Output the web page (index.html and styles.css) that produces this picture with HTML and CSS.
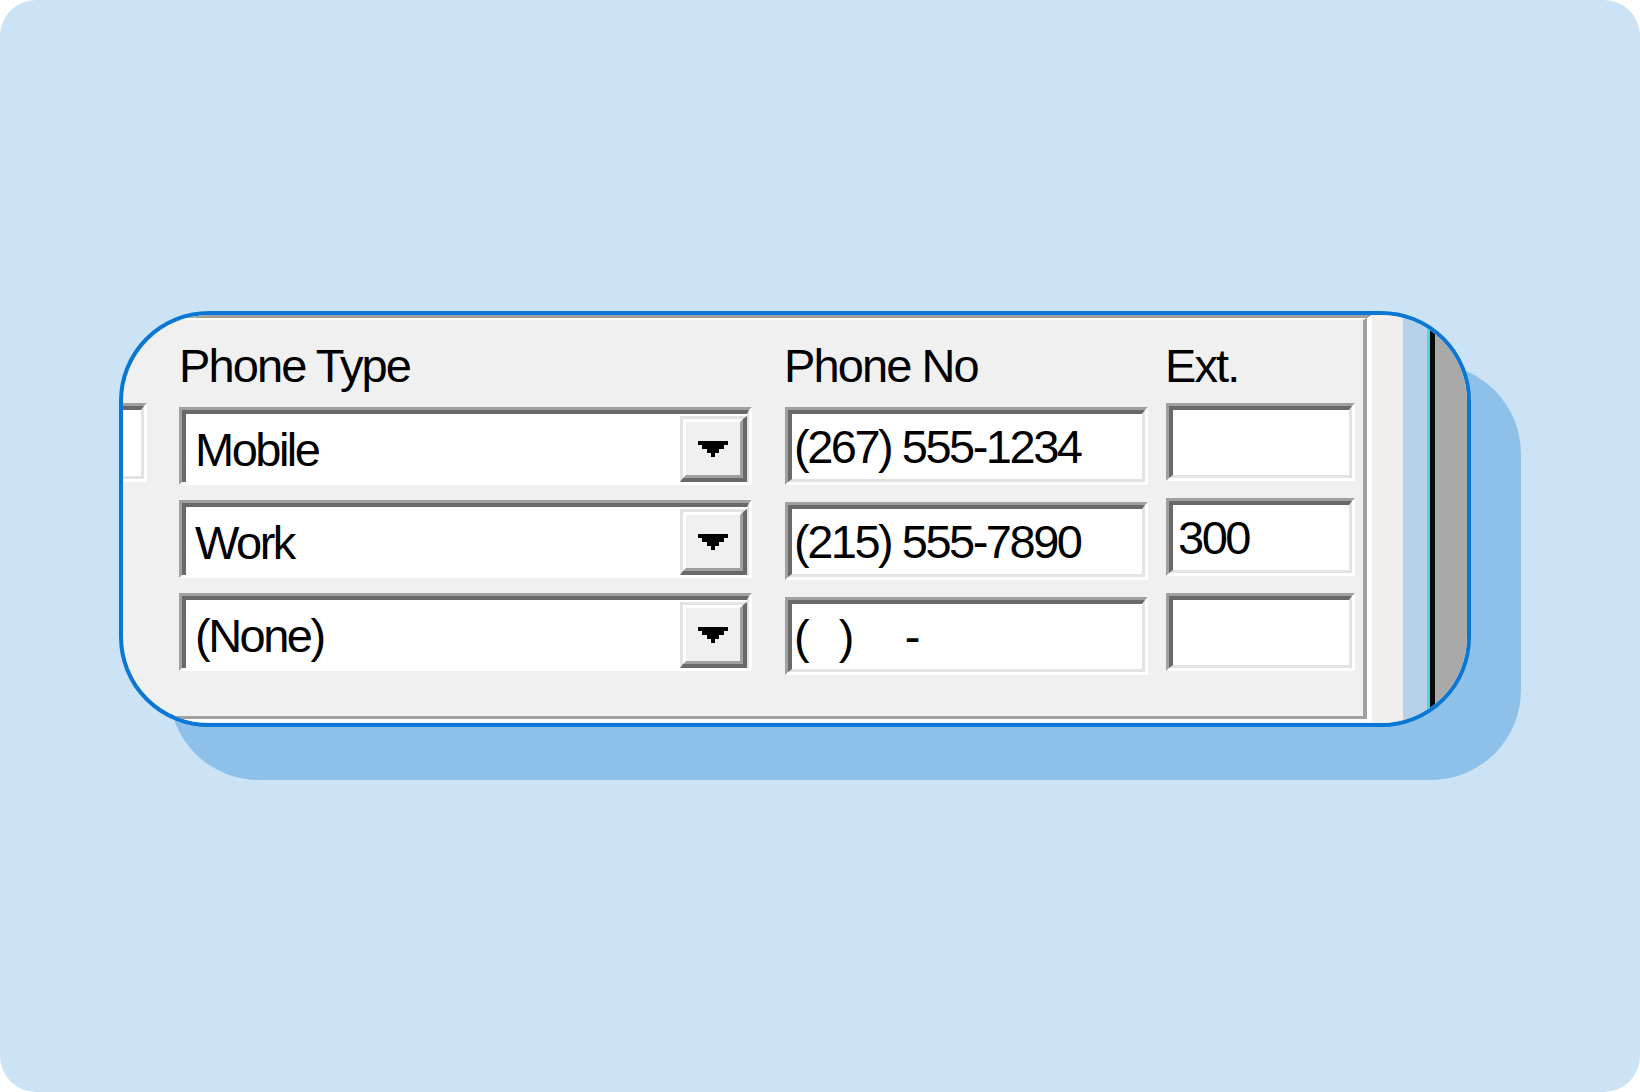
FILE: index.html
```html
<!DOCTYPE html>
<html lang="en">

<head>
    <meta charset="UTF-8">
    <meta name="viewport" content="width=device-width, initial-scale=1.0">
    <title>Phone numbers</title>
    <link rel="stylesheet" href="styles.css">
</head>

<body>
    <div class="frame">
        <div class="card">
            <div class="shot">
                <div class="group">
                    <div class="group-in">
                        <!-- cut-off field from the column to the left -->
                        <div class="col col-cut">
                            <div class="edit edit-cut">
                                <div class="edit-in"></div>
                            </div>
                        </div>
                        <div class="col col-type">
                            <div class="label">Phone Type</div>
                            <div class="combo">
                                <div class="combo-in">
                                    <span class="val">Mobile</span>
                                    <span class="drop"><span class="drop-in"><svg width="30" height="16" viewBox="0 0 7 4" preserveAspectRatio="none" shape-rendering="crispEdges"><path d="M0 0H7V1H6V2H5V3H4V4H3V3H2V2H1V1H0Z" fill="#000"/></svg></span></span>
                                </div>
                            </div>
                            <div class="combo">
                                <div class="combo-in">
                                    <span class="val">Work</span>
                                    <span class="drop"><span class="drop-in"><svg width="30" height="16" viewBox="0 0 7 4" preserveAspectRatio="none" shape-rendering="crispEdges"><path d="M0 0H7V1H6V2H5V3H4V4H3V3H2V2H1V1H0Z" fill="#000"/></svg></span></span>
                                </div>
                            </div>
                            <div class="combo">
                                <div class="combo-in">
                                    <span class="val">(None)</span>
                                    <span class="drop"><span class="drop-in"><svg width="30" height="16" viewBox="0 0 7 4" preserveAspectRatio="none" shape-rendering="crispEdges"><path d="M0 0H7V1H6V2H5V3H4V4H3V3H2V2H1V1H0Z" fill="#000"/></svg></span></span>
                                </div>
                            </div>
                        </div>
                        <div class="col col-phone">
                            <div class="label">Phone No</div>
                            <div class="edit">
                                <div class="edit-in">(267) 555-1234</div>
                            </div>
                            <div class="edit">
                                <div class="edit-in">(215) 555-7890</div>
                            </div>
                            <div class="edit">
                                <div class="edit-in">(   )     -</div>
                            </div>
                        </div>
                        <div class="col col-ext">
                            <div class="label">Ext.</div>
                            <div class="edit">
                                <div class="edit-in"></div>
                            </div>
                            <div class="edit">
                                <div class="edit-in">300</div>
                            </div>
                            <div class="edit">
                                <div class="edit-in"></div>
                            </div>
                        </div>
                    </div>
                </div>
                <div class="strip strip-face"></div>
                <div class="strip strip-sel"></div>
                <div class="strip strip-cyan"></div>
                <div class="strip strip-line"></div>
                <div class="strip strip-gray"></div>
            </div>
        </div>
    </div>
</body>

</html>
```

FILE: styles.css
```css
* {
    margin: 0;
    padding: 0;
    box-sizing: border-box;
}

body {
    background: #fff;
}

.frame {
    width: 1640px;
    height: 1092px;
    border-radius: 36px;
    background: #cce2f5;
    padding: 311px 0 0 119px;
    overflow: hidden;
}

.card {
    width: 1352px;
    height: 416px;
    border: 4px solid #0b77d5;
    border-radius: 90px;
    box-shadow: 50px 53px 0 #8dc1ea;
    overflow: hidden;
    background: #f0f0f0;
    font-family: "Liberation Sans", Arial, sans-serif;
    color: #000;
}

.shot {
    display: flex;
    height: 100%;
}

/* etched group box, left side is off-screen */
.group {
    width: 1249px;
    height: 407px;
    border-style: solid;
    border-width: 3px 5px 3px 0;
    border-color: #a0a0a0 #fff #fff;
}

.group-in {
    height: 100%;
    display: flex;
    border-style: solid;
    border-width: 2px 4px 3px 0;
    border-color: #fff #a0a0a0 #a0a0a0;
}

.col {
    display: flex;
    flex-direction: column;
}

.col-cut {
    width: 24px;
}

.col-type {
    width: 573px;
    margin-left: 32px;
}

.col-phone {
    width: 363px;
    margin-left: 33px;
}

.col-ext {
    width: 189px;
    margin-left: 18px;
}

.label,
.val,
.edit-in {
    font-size: 47px;
    line-height: 47px;
    letter-spacing: -2.5px;
    white-space: pre;
}

.label {
    height: 47px;
    margin-top: 22px;
    letter-spacing: -1.9px;
}

.col-phone .label,
.col-ext .label {
    margin-left: -1px;
}

/* sunken 3d fields */
.combo,
.edit {
    height: 78px;
    border: 3px solid;
    border-color: #a0a0a0 #fff #fff #a0a0a0;
}

.combo {
    margin-top: 15px;
}

.label + .combo {
    margin-top: 18px;
}

.combo-in {
    height: 100%;
    display: flex;
    background: #fff;
    border-style: solid;
    border-width: 4px 2px 0 4px;
    border-color: #696969 #e3e3e3 #e3e3e3 #696969;
}

.val {
    flex: 1;
    padding: 12px 0 0 9px;
}

.drop {
    width: 67px;
    margin-top: 2px;
    border-style: solid;
    border-width: 3px 4px 4px 3px;
    border-color: #e3e3e3 #696969 #696969 #e3e3e3;
}

.drop-in {
    height: 100%;
    display: flex;
    align-items: center;
    justify-content: center;
    background: #f0f0f0;
    border: 3px solid;
    border-color: #fff #a0a0a0 #a0a0a0 #fff;
}

.edit {
    margin-top: 17px;
}

.col-phone .label + .edit {
    margin-top: 18px;
}

.col-ext .label + .edit {
    margin-top: 14px;
}

.edit-cut {
    width: 60px;
    height: 79px;
    margin-left: -36px;
    margin-top: 83px;
}

.edit-in {
    height: 100%;
    background: #fff;
    border-style: solid;
    border-width: 4px 3px 3px 4px;
    border-color: #696969 #e3e3e3 #e3e3e3 #696969;
    padding: 9px 0 0 2px;
}

.col-ext .edit-in {
    padding-left: 5px;
}

/* bits of the window next to the group box */
.strip-face {
    width: 31px;
    background: #f1efee;
}

.strip-sel {
    width: 24px;
    background: #b7d2e8;
}

.strip-cyan {
    width: 3px;
    background: #56d0e2;
}

.strip-line {
    width: 5px;
    background: #0a0a0a;
}

.strip-gray {
    width: 32px;
    background: #a9a9a9;
}
```
